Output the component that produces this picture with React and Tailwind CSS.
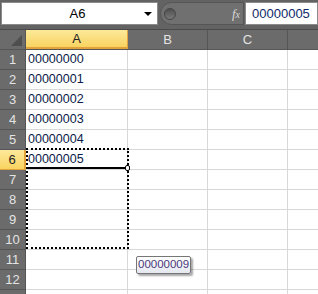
import React from "react";

const font = "font-['Liberation_Sans',Arial,sans-serif]";

const rows = [
  "00000000",
  "00000001",
  "00000002",
  "00000003",
  "00000004",
  "00000005",
  "",
  "",
  "",
  "",
  "",
  "",
  "",
];

export default function App() {
  return (
    <div className={`relative w-[318px] h-[294px] overflow-hidden bg-white ${font}`}>
      {/* formula bar */}
      <div className="flex items-start h-[30px] bg-[#636363] border-b border-[#4a4a4a]">
        <div className="ml-[1px] mt-[2px] w-[157px] h-[23px] bg-white border border-[#8a8a8a] flex items-center relative">
          <span className="flex-1 text-center text-[13px] text-black pr-[4px]">A6</span>
          <span className="absolute right-[5px] top-[9px] w-0 h-0 border-l-[4px] border-r-[4px] border-t-[4px] border-l-transparent border-r-transparent border-t-black" />
        </div>
        <div className="ml-[2px] mt-[2px] w-[84px] h-[23px] rounded-l-[12px] bg-[#707070] border border-[#555] flex items-center">
          <span className="ml-[3px] w-[12px] h-[12px] rounded-full bg-gradient-to-b from-[#4e4e4e] to-[#7a7a7a] border border-[#454545]" />
          <span className="ml-auto mr-[3px] text-[13px] italic text-[#d8d8d8] font-['Liberation_Serif',serif]">
            f<span className="text-[10px]">x</span>
          </span>
        </div>
        <div className="ml-[1px] mt-[2px] flex-1 h-[23px] bg-white border border-[#8a8a8a] flex items-center pl-[6px] text-[13px] text-[#102a6a]">
          00000005
        </div>
      </div>

      {/* column headers */}
      <div className="flex h-[20px] bg-[#6b6b6b] border-b border-[#555]">
        <div className="w-[26px] border-r border-[#555] relative">
          <span className="absolute right-[3px] bottom-[3px] w-0 h-0 border-b-[11px] border-l-[11px] border-b-[#4e4e4e] border-l-transparent" />
        </div>
        <div className="w-[102px] bg-gradient-to-b from-[#fde99a] to-[#f8d35e] border-r border-[#e2a23c] border-b-2 border-b-[#e2a23c] flex items-center justify-center text-[13px] text-[#222]">
          A
        </div>
        <div className="w-[80px] border-r border-[#555] flex items-center justify-center text-[13px] text-[#e4e4e4]">
          B
        </div>
        <div className="w-[80px] border-r border-[#555] flex items-center justify-center text-[13px] text-[#e4e4e4]">
          C
        </div>
        <div className="flex-1" />
      </div>

      {/* rows */}
      <div className="flex flex-col">
        {rows.map((v, i) => {
          const active = i === 5;
          return (
            <div key={i} className="flex h-[20px]">
              <div
                className={
                  active
                    ? "w-[26px] shrink-0 flex items-center justify-center text-[13px] text-[#222] bg-gradient-to-b from-[#fde99a] to-[#f8d35e] border-b border-[#e2a23c] border-r-2 border-r-[#e2a23c]"
                    : "w-[26px] shrink-0 flex items-center justify-center text-[13px] text-[#e4e4e4] bg-[#6b6b6b] border-b border-[#555] border-r border-r-[#555]"
                }
              >
                {i < 12 ? i + 1 : ""}
              </div>
              <div className="w-[102px] shrink-0 border-b border-r border-[#d8d8d8] flex items-center pl-[2px] text-[12.5px] text-[#0b1a4a]">
                {v}
              </div>
              <div className="w-[80px] shrink-0 border-b border-r border-[#d8d8d8]" />
              <div className="w-[80px] shrink-0 border-b border-r border-[#d8d8d8]" />
              <div className="flex-1 border-b border-[#d8d8d8]" />
            </div>
          );
        })}
      </div>

      {/* copy marquee A6:A10 */}
      <div className="absolute left-[26px] top-[148px] w-[103px] h-[101px] border-2 border-dotted border-black" />
      {/* active cell bottom edge + fill handle */}
      <div className="absolute left-[26px] top-[167px] w-[101px] h-[2px] bg-black" />
      <div className="absolute left-[125px] top-[165px] w-[5px] h-[6px] rounded-[2px] bg-white border border-black" />

      {/* autofill tooltip */}
      <div className="absolute left-[136px] top-[256px] px-[1px] h-[18px] flex items-center bg-gradient-to-b from-white to-[#e4e7f0] border border-[#767676] rounded-[2px] shadow-[2px_2px_2px_rgba(0,0,0,0.35)] text-[11.5px] text-[#4a3a7a]">
        00000009
      </div>
    </div>
  );
}
